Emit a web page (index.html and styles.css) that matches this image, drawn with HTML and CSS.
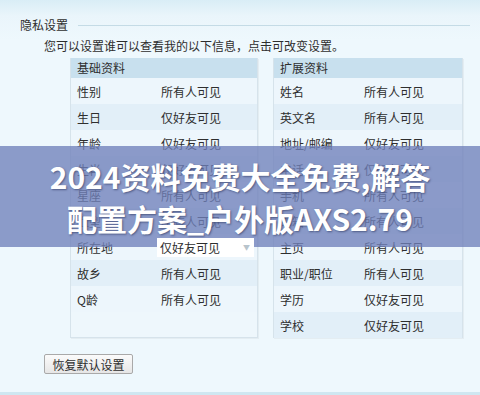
FILE: index.html
```html
<!DOCTYPE html>
<html lang="zh-CN">
<head>
<meta charset="UTF-8">
<title>隐私设置</title>
<link rel="stylesheet" href="styles.css">
</head>
<body>

<div class="page">
  <div class="title"><span>隐私设置</span><i class="rule"></i></div>
  <p class="intro">您可以设置谁可以查看我的以下信息，点击可改变设置。</p>

  <div class="panels">
    <div class="panel left">
      <div class="head">基础资料</div>
      <div class="row"><span class="k">性别</span><span class="v">所有人可见</span></div>
      <div class="row"><span class="k">生日</span><span class="v">仅好友可见</span></div>
      <div class="row"><span class="k">年龄</span><span class="v">仅好友可见</span></div>
      <div class="row"><span class="k">生肖</span><span class="v">仅好友可见</span></div>
      <div class="row"><span class="k">星座</span><span class="v">所有人可见</span></div>
      <div class="row"><span class="k">血型</span><span class="v">所有人可见</span></div>
      <div class="row"><span class="k">所在地</span><span class="v select">仅好友可见<b class="arrow">▼</b></span></div>
      <div class="row"><span class="k">故乡</span><span class="v">所有人可见</span></div>
      <div class="row"><span class="k">Q龄</span><span class="v">所有人可见</span></div>
    </div>
    <div class="panel right">
      <div class="head">扩展资料</div>
      <div class="row"><span class="k">姓名</span><span class="v">所有人可见</span></div>
      <div class="row"><span class="k">英文名</span><span class="v">所有人可见</span></div>
      <div class="row"><span class="k">地址/邮编</span><span class="v">仅好友可见</span></div>
      <div class="row"><span class="k">电话</span><span class="v">仅好友可见</span></div>
      <div class="row"><span class="k">手机</span><span class="v">所有人可见</span></div>
      <div class="row"><span class="k">邮箱</span><span class="v">所有人可见</span></div>
      <div class="row"><span class="k">主页</span><span class="v">所有人可见</span></div>
      <div class="row"><span class="k">职业/职位</span><span class="v">所有人可见</span></div>
      <div class="row"><span class="k">学历</span><span class="v">仅好友可见</span></div>
      <div class="row"><span class="k">学校</span><span class="v">仅好友可见</span></div>
    </div>
  </div>

  <button class="reset">恢复默认设置</button>
</div>

<div class="banner">
  <p>2024资料免费大全免费,解答</p>
  <p>配置方案_户外版AXS2.79</p>
</div>

</body>
</html>
```

FILE: styles.css
```css
html, body { margin:0; padding:0; }
body {
  width:480px; height:395px; overflow:hidden; position:relative;
  font-family:"Noto Sans CJK SC", "Noto Sans", sans-serif; font-size:12px; color:#2e2e2e;
  background:linear-gradient(#d9edf6 0, #eaf5fb 16px, #eef8fd 40px, #eef8fd 392px, #cfe7f1 392px);
}
.page { padding:18px 0 0 0; }

.title { display:flex; align-items:center; height:14px; padding-left:20px; }
.title span { line-height:14px; }
.rule { flex:1; height:1px; background:#c4dbe6; margin:0 10px 0 10px; }

.intro { margin:7px 0 0 44px; line-height:14px; height:14px; }

.panels { display:flex; gap:15px; margin:5px 0 0 70px; }
.panel {
  height:280px; box-sizing:border-box;
  background:#eef7fc; border:1px solid #d6e3eb; border-top:0;
  box-shadow:1px 1px 0 #e4edf2;
}
.panel.left { width:188px; }
.panel.right { width:190px; }

.head {
  height:20px; line-height:20px; padding-left:6px;
  background:#c8e0ee;
}
.row { display:flex; align-items:center; height:26px; padding-left:6px; }
.row:nth-of-type(odd) { background:#e2eff8; }
.row:nth-of-type(even) { background:#edf6fc; }
.k { width:84px; }
.v { flex:1; }

/* 所在地 下拉框 */
.select {
  position:relative; z-index:3;
  display:flex; align-items:center; justify-content:space-between;
  flex:none; width:97px; height:19px; margin-left:-3px; margin-right:3px; padding-left:3px;
  box-sizing:border-box; background:#fff;
}
.arrow { font-weight:normal; font-size:7px; color:#b8c4cc; margin-right:4px; }

.reset {
  display:block; margin:16px 0 0 44px; width:89px; height:20px; padding:0;
  font-family:inherit; font-size:12px; color:#2e2e2e;
  background:linear-gradient(#fbfbfb, #e6e6e6); border:1px solid #a9a9a9; border-radius:2px;
}

.banner {
  position:absolute; left:0; top:146px; width:480px; height:101px; z-index:2;
  background:rgba(112,128,186,.78);
  display:flex; flex-direction:column; justify-content:center; align-items:center;
}
.banner p {
  margin:0; color:#fff; font-weight:700; font-size:30px; line-height:42px;
  text-shadow:1px 1px 2px rgba(40,50,90,.6);
}
```
